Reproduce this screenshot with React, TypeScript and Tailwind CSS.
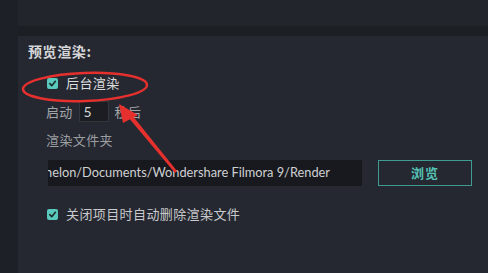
import React from "react";

const cjk = { fontFamily: '"Noto Sans CJK SC", "Noto Sans", sans-serif' };
const lat = { fontFamily: 'Lato, "Noto Sans CJK SC", sans-serif' };

function Check() {
  return (
    <div className="w-[11px] h-[11px] rounded-[2px] bg-[#58c9bc] flex items-center justify-center shrink-0">
      <svg width="9" height="9" viewBox="0 0 10 10">
        <path d="M2 5.2 L4.2 7.4 L8.2 2.6" fill="none" stroke="#1d2a2c" strokeWidth="1.8" strokeLinecap="round" strokeLinejoin="round" />
      </svg>
    </div>
  );
}

export default function App() {
  return (
    <div className="relative w-[488px] h-[273px] flex bg-[#1e2127] overflow-hidden" style={cjk}>
      <div className="w-[18px] bg-[#1d2026]" />
      <div className="flex-1 flex flex-col">
        <div className="h-[26px] bg-[#22252c]" />
        <div className="h-[10px] bg-[#1c1f24]" />
        <div className="flex-1 bg-[#252830] flex flex-col pl-[10px] pt-[6px]">
          <div className="h-[18px] leading-[18px] text-[14px] font-semibold tracking-[0.6px] text-[#d6d7d9]">预览渲染:</div>
          <div className="mt-[14px] ml-[19px] h-[18px] flex items-center gap-[8px]">
            <Check />
            <span className="text-[13px] leading-[18px] tracking-[0.4px] text-[#dcdddf]">后台渲染</span>
          </div>
          <div className="mt-[9px] ml-[18px] h-[21px] flex items-center">
            <span className="text-[13px] tracking-[0.3px] text-[#a3a5a9]">启动</span>
            <div className="ml-[6px] w-[30px] h-[21px] bg-[#1b1d22] border border-[#33363d] flex items-center pl-[4px] text-[14px] text-[#d4d5d7]" style={lat}>5</div>
            <span className="ml-[6px] text-[13px] tracking-[0.3px] text-[#a3a5a9]">秒后</span>
          </div>
          <div className="mt-[9px] ml-[18px] h-[18px] leading-[18px] text-[13px] tracking-[0.4px] text-[#9c9ea2]">渲染文件夹</div>
          <div className="mt-[11px] ml-[20px] flex items-center">
            <div className="w-[314px] h-[26px] bg-[#18191e] overflow-hidden flex items-center">
              <span className="whitespace-nowrap text-[12.8px] text-[#cfd0d2] ml-[-3px]" style={lat}>nelon/Documents/Wondershare Filmora 9/Render</span>
            </div>
            <div className="ml-[16px] w-[94px] h-[26px] border border-[#3e9c92] flex items-center justify-center text-[13px] font-bold text-[#55c2b5] tracking-[1px]">浏览</div>
          </div>
          <div className="mt-[19px] ml-[19px] h-[18px] flex items-center gap-[8px]">
            <Check />
            <span className="text-[13px] leading-[18px] tracking-[0.4px] text-[#c9cacd]">关闭项目时自动删除渲染文件</span>
          </div>
        </div>
      </div>
      <svg className="absolute left-0 top-0 pointer-events-none" width="488" height="273" viewBox="0 0 488 273">
        <ellipse cx="85" cy="87" rx="62" ry="14" fill="none" stroke="#e5302e" strokeWidth="2.5" transform="rotate(-2 85 87)" />
        <polygon points="119,104 123,123 138,115" fill="#e5302e" />
        <polygon points="128,117 132,115 177,171 175,173" fill="#e5302e" />
      </svg>
    </div>
  );
}
